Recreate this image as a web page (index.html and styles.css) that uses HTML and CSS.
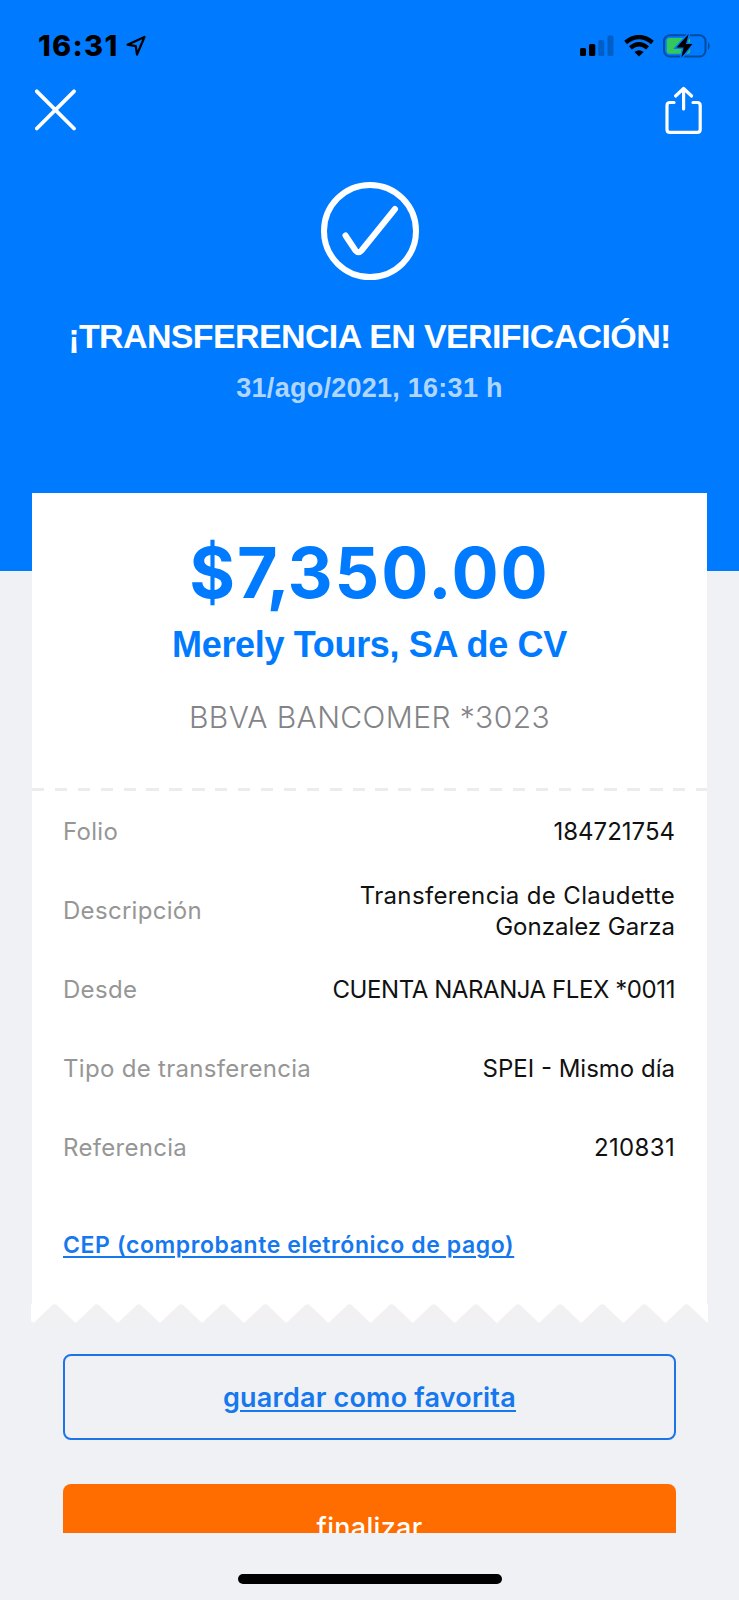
FILE: index.html
```
<!DOCTYPE html>
<html lang="es">
<head>
    <meta charset="UTF-8">
    <meta name="viewport" content="width=device-width, initial-scale=1.0">
    <title>Transferencia en verificación</title>
    <link rel="stylesheet" href="styles.css">
</head>
<body>
    <header class="header">
        <div class="status-bar">
            <div class="status-left">
                <span class="time">16:31</span>
                <svg class="location" width="22" height="22" viewBox="0 0 22 22">
                    <path d="M2.5 9.7 L19.5 2 L12 19.5 L10.8 11.2 Z" fill="none" stroke="#000" stroke-width="2.2" stroke-linejoin="round"/>
                </svg>
            </div>
            <div class="status-right">
                <svg width="35" height="22" viewBox="0 0 35 22">
                    <rect x="0" y="13" width="6" height="8" rx="1.5"/>
                    <rect x="9" y="9" width="6.3" height="12" rx="1.5"/>
                    <rect x="18.3" y="5" width="6" height="16" rx="1.5" opacity="0.22"/>
                    <rect x="27.5" y="0.5" width="6" height="20.5" rx="1.5" opacity="0.22"/>
                </svg>
                <svg width="30" height="22" viewBox="0 0 30 22">
                    <path d="M1.6 7.4 Q15 -3.2 28.4 7.4" fill="none" stroke="#000" stroke-width="4.4"/>
                    <path d="M6.4 12.9 Q15 5.6 23.6 12.9" fill="none" stroke="#000" stroke-width="4.4"/>
                    <path d="M10.4 17.1 Q15 13.4 19.6 17.1 L15 21.6 Z"/>
                </svg>
                <svg width="50" height="26" viewBox="0 0 50 26">
                    <rect x="1" y="2.2" width="41.5" height="21.4" rx="6" fill="none" stroke="#000" stroke-opacity="0.38" stroke-width="2"/>
                    <path d="M45 9 Q48.6 13 45 17 Z" fill-opacity="0.4"/>
                    <rect x="3.7" y="5" width="23.5" height="15.8" rx="3" fill="#34c759"/>
                    <path d="M25.7 1 L13.5 14.6 L20.6 14.6 L18.3 24.8 L29.4 11 L23 11 Z" stroke="#007aff" stroke-width="3"/>
                    <path d="M25.7 1 L13.5 14.6 L20.6 14.6 L18.3 24.8 L29.4 11 L23 11 Z"/>
                </svg>
            </div>
        </div>

        <nav class="nav">
            <button class="icon-btn" aria-label="Cerrar">
                <svg width="42" height="42" viewBox="0 0 42 42">
                    <path d="M1.8 2.3 L39 39.5 M39 2.3 L1.8 39.5" stroke="#fff" stroke-width="3.8" stroke-linecap="round"/>
                </svg>
            </button>
            <button class="icon-btn" aria-label="Compartir">
                <svg width="38" height="48" viewBox="0 0 38 48">
                    <path d="M9 16.5 H5 Q2 16.5 2 19.5 V43.5 Q2 46.4 5 46.4 H32.2 Q35.2 46.4 35.2 43.5 V19.5 Q35.2 16.5 32.2 16.5 H28 M18.6 23 V2.5 M10.6 10 L18.6 2.5 L26.6 10" fill="none" stroke="#fff" stroke-width="3.2" stroke-linecap="round" stroke-linejoin="round"/>
                </svg>
            </button>
        </nav>

        <svg class="check" width="98" height="98" viewBox="0 0 98 98">
            <circle cx="49" cy="49" r="46" fill="none" stroke="#fff" stroke-width="6"/>
            <path d="M24.5 53.5 L34.5 68.5 Q37.5 72 40.5 68.5 L74 27" fill="none" stroke="#fff" stroke-width="6" stroke-linecap="round" stroke-linejoin="round"/>
        </svg>
        <h1 class="title">¡TRANSFERENCIA EN VERIFICACIÓN!</h1>
        <p class="date">31/ago/2021, 16:31 h</p>
    </header>

    <main class="content">
        <section class="receipt">
            <div class="summary">
                <p class="amount">$<span class="thousands">7,</span>350.00</p>
                <p class="payee">Merely Tours, SA de CV</p>
                <p class="bank">BBVA BANCOMER *3023</p>
            </div>
            <div class="divider"></div>
            <dl class="details">
                <div class="row">
                    <dt>Folio</dt>
                    <dd>184721754</dd>
                </div>
                <div class="row">
                    <dt>Descripción</dt>
                    <dd><span class="wide">Transferencia de Claudette</span><br>Gonzalez Garza</dd>
                </div>
                <div class="row">
                    <dt>Desde</dt>
                    <dd class="caps">CUENTA NARANJA FLEX *0011</dd>
                </div>
                <div class="row">
                    <dt>Tipo de transferencia</dt>
                    <dd>SPEI - Mismo día</dd>
                </div>
                <div class="row">
                    <dt>Referencia</dt>
                    <dd class="wide">210831</dd>
                </div>
            </dl>
            <a href="#" class="cep-link">CEP (comprobante eletrónico de pago)</a>
        </section>

        <!-- torn paper edge -->
        <svg class="torn-edge" width="677" height="32" viewBox="0 0 677 32">
            <defs>
                <linearGradient id="shade" x1="0" y1="0" x2="0" y2="1">
                    <stop offset="0.5" stop-color="#f1f1f3"/>
                    <stop offset="1" stop-color="#eff1f5"/>
                </linearGradient>
                <pattern id="teeth" x="2.5" width="42.13" height="32" patternUnits="userSpaceOnUse">
                    <path d="M0 0 H42.13 V19 L23 0.8 Q21.1 -0.4 19.2 0.8 L0 19 Z" fill="#fff"/>
                </pattern>
            </defs>
            <rect width="677" height="32" fill="url(#shade)"/>
            <rect width="677" height="32" fill="url(#teeth)"/>
        </svg>

        <div class="actions">
            <button class="btn favorite-btn">guardar como favorita</button>
            <button class="btn finish-btn">finalizar</button>
        </div>
    </main>

    <footer class="home-bar">
        <div class="home-indicator"></div>
    </footer>
</body>
</html>
```
FILE: styles.css
```
* {
    margin: 0;
    padding: 0;
    box-sizing: border-box;
}

body {
    background: #eff1f5;
    font-family: Inter, 'Liberation Sans', sans-serif;
    height: 1600px;
    overflow: hidden;
}

svg {
    display: block;
}

.header {
    height: 571px;
    padding-top: 30px;
    background: #007aff;
    display: flex;
    flex-direction: column;
    align-items: center;
}

.status-bar {
    width: 100%;
    height: 31px;
    padding: 0 26px 0 38px;
    display: flex;
    justify-content: space-between;
    align-items: center;
}

.status-left,
.status-right {
    display: flex;
    align-items: center;
}

.status-left {
    gap: 6px;
}

.status-right {
    gap: 9px;
}

.time {
    font-size: 29px;
    font-weight: 800;
    line-height: 31px;
    letter-spacing: 1.3px;
}

.nav {
    width: 100%;
    height: 98px;
    padding: 0 36px 0 35px;
    display: flex;
    justify-content: space-between;
    align-items: center;
}

.icon-btn {
    background: none;
    border: none;
}

.check {
    margin-top: 23px;
}

.title {
    margin-top: 36px;
    color: #fff;
    font-family: 'Liberation Sans', sans-serif;
    font-size: 34px;
    font-weight: 700;
    line-height: 40px;
    letter-spacing: -0.63px;
    white-space: nowrap;
}

.date {
    margin-top: 15px;
    color: #b0d6ff;
    font-family: 'Liberation Sans', sans-serif;
    font-size: 27px;
    font-weight: 700;
    line-height: 34px;
    letter-spacing: 0.26px;
}

.content {
    height: 1040px;
    margin-top: -78px;
    overflow: hidden;
}

.receipt {
    height: 811px;
    margin: 0 32px;
    padding-top: 40px;
    background: #fff;
}

.summary {
    text-align: center;
    white-space: nowrap;
}

.amount {
    color: #007aff;
    font-size: 70px;
    font-weight: 700;
    line-height: 80px;
    letter-spacing: 1.9px;
}

/* tighter round the comma */
.amount .thousands {
    letter-spacing: -2.5px;
}

.payee {
    margin-top: 10px;
    color: #007aff;
    font-family: 'Liberation Sans', sans-serif;
    font-size: 36px;
    font-weight: 700;
    line-height: 44px;
    letter-spacing: -0.33px;
}

.bank {
    margin-top: 32px;
    color: #838487;
    font-size: 30px;
    font-weight: 300;
    line-height: 36px;
    letter-spacing: 0.4px;
}

.divider {
    height: 3px;
    margin-top: 53px;
    background: repeating-linear-gradient(to right, #ececec 0, #ececec 12.3px, #fff 12.3px, #fff 22.9px);
}

.details {
    padding: 1px 32px 0 31px;
}

.row {
    height: 79px;
    display: flex;
    justify-content: space-between;
    align-items: center;
    font-size: 24px;
    line-height: 31px;
    white-space: nowrap;
}

.row dt {
    color: #969696;
    font-weight: 400;
    letter-spacing: 0.3px;
}

.row dd {
    color: #111;
    text-align: right;
}

.row .wide {
    letter-spacing: 0.35px;
}

.row .caps {
    letter-spacing: -0.42px;
}

.cep-link {
    display: inline-block;
    margin: 43px 0 0 31px;
    color: #1578ee;
    font-size: 23px;
    font-weight: 600;
    line-height: 30px;
    letter-spacing: 0.6px;
    white-space: nowrap;
    text-decoration-thickness: 2px;
    text-underline-offset: 3px;
}

.torn-edge {
    margin: 0 31px;
}

.actions {
    margin: 18px 63px 0;
    display: flex;
    flex-direction: column;
    gap: 44px;
}

.btn {
    height: 86px;
    border: none;
    border-radius: 8px;
    font-family: inherit;
    font-size: 27px;
    font-weight: 500;
    letter-spacing: 0.3px;
}

.favorite-btn {
    background: none;
    border: 2px solid #1c74e8;
    color: #1578ee;
    font-weight: 600;
    letter-spacing: 0.2px;
    text-decoration: underline;
    text-decoration-thickness: 2px;
    text-underline-offset: 3px;
}

.finish-btn {
    background: #ff6c00;
    color: #fff;
}

.home-bar {
    height: 67px;
    padding-top: 41px;
}

.home-indicator {
    width: 264px;
    height: 10px;
    margin: 0 auto;
    border-radius: 5px;
    background: #000;
}
```
